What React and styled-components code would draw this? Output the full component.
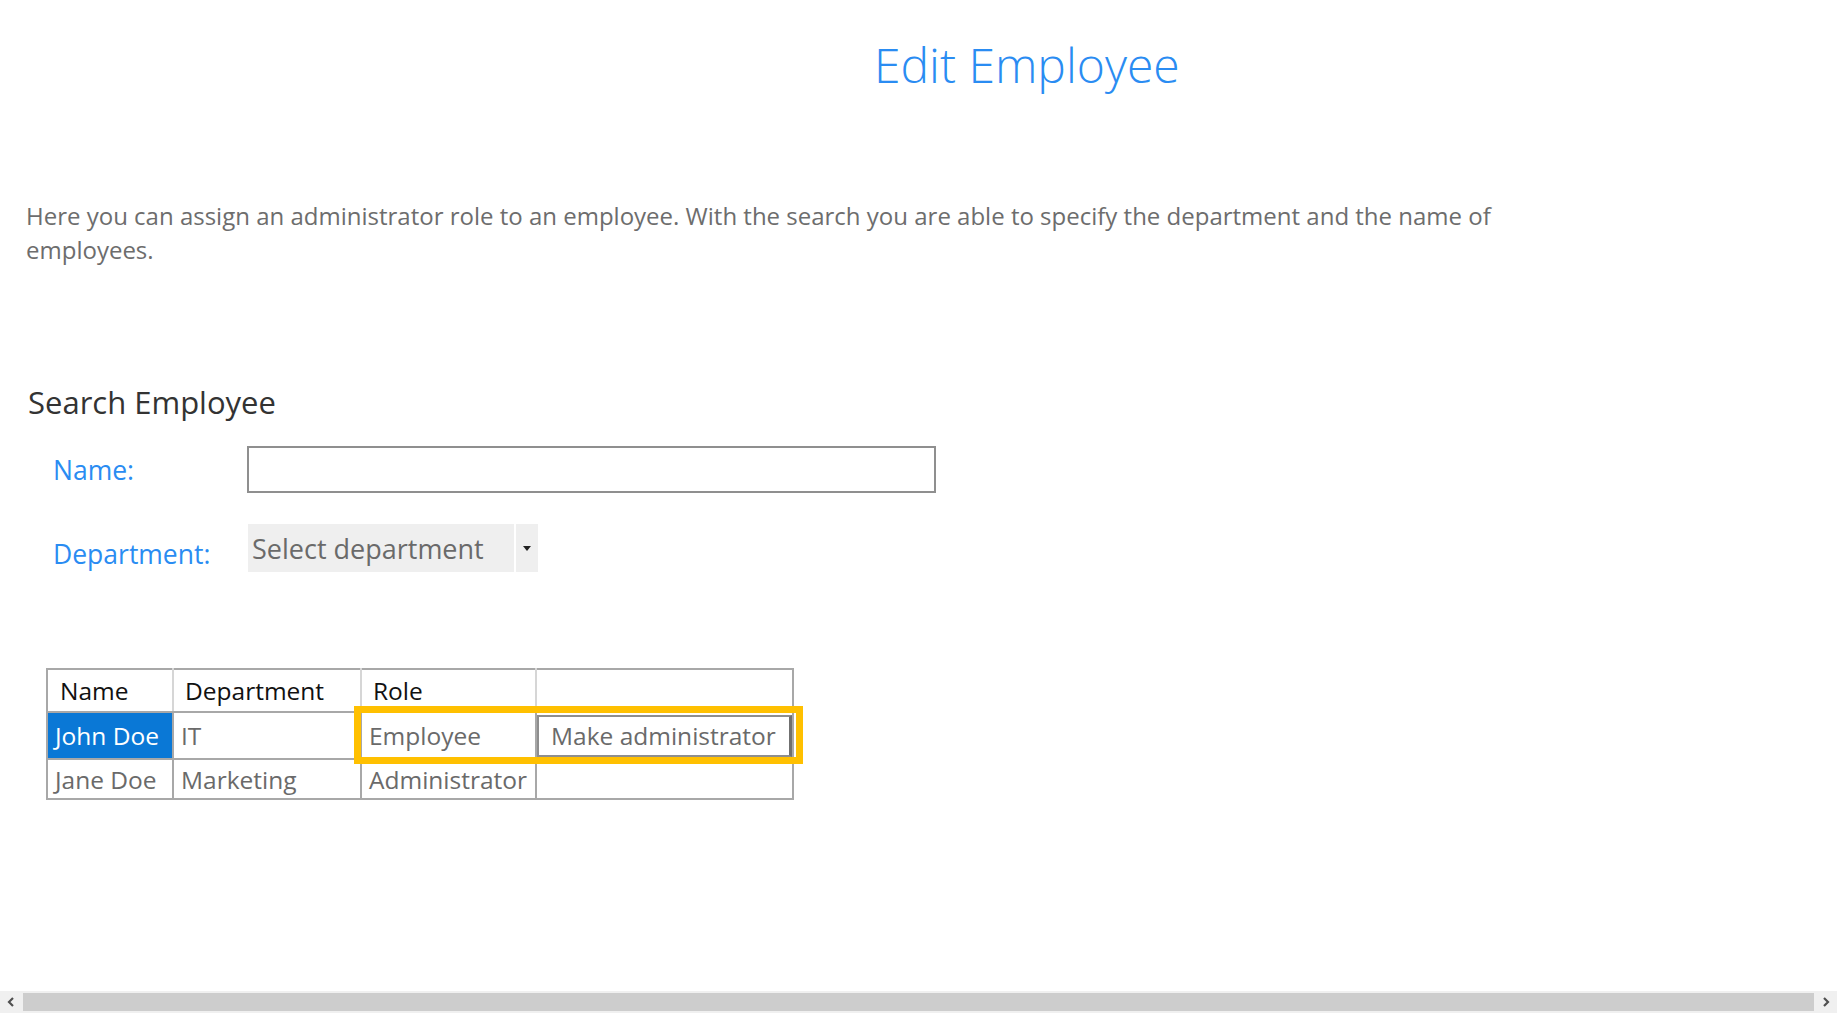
import React from "react";
import styled, { createGlobalStyle } from "styled-components";

const GlobalStyle = createGlobalStyle`
  html, body {
    margin: 0;
    padding: 0;
    background: #ffffff;
    overflow: hidden;
  }
  body {
    font-family: "Open Sans", "Noto Sans", "Liberation Sans", sans-serif;
  }
`;

const employees = [
  { name: "John Doe", department: "IT", role: "Employee", selected: true, action: "Make administrator" },
  { name: "Jane Doe", department: "Marketing", role: "Administrator", selected: false, action: null },
];

const Page = styled.div`
  display: flex;
  flex-direction: column;
  height: 100vh;
`;

const Content = styled.main`
  flex: 1;
  padding: 0 26px;
`;

const Title = styled.h1`
  margin: 34px 0 0 0;
  padding-left: 848px;
  font-size: 48px;
  line-height: 62px;
  font-weight: 300;
  color: #2a8cf2;
  white-space: nowrap;
`;

const Intro = styled.p`
  margin: 103px 0 0 0;
  max-width: 1520px;
  font-size: 24px;
  line-height: 34px;
  color: #6d6d6d;
`;

const SectionTitle = styled.h2`
  margin: 115px 0 0 2px;
  font-size: 31px;
  line-height: 40px;
  font-weight: 400;
  color: #333333;
`;

const Form = styled.div`
  margin-top: 24px;
  padding-left: 27px;
  display: grid;
  grid-template-columns: 194px auto;
  justify-content: start;
  row-gap: 31px;
  align-items: center;
`;

const Label = styled.label`
  font-size: 26.5px;
  line-height: 34px;
  color: #2a8cf2;
  margin-top: ${props => props.offset || 0}px;
`;

const TextInput = styled.input`
  box-sizing: border-box;
  width: 689px;
  height: 47px;
  border: 2px solid #8f8f8f;
  background: #ffffff;
  outline: none;
  font-family: inherit;
  font-size: 22px;
  padding: 0 10px;
`;

const Select = styled.div`
  display: flex;
  height: 48px;
  width: 290px;
  background: #efefef;
  margin-left: 1px;
`;

const SelectValue = styled.div`
  flex: 1;
  display: flex;
  align-items: center;
  padding-left: 4px;
  font-size: 27px;
  color: #6a6a6a;
  border-right: 2px solid #ffffff;
`;

const SelectArrow = styled.div`
  width: 22px;
  display: flex;
  align-items: center;
  justify-content: center;
`;

const TableWrap = styled.div`
  position: relative;
  margin: 96px 0 0 20px;
  width: max-content;
`;

const Table = styled.table`
  border-collapse: collapse;
  border: 2px solid #a8a8a8;
  font-size: 24.5px;
`;

const HeadCell = styled.th`
  box-sizing: border-box;
  width: ${props => props.w}px;
  height: 43px;
  padding: 0 0 0 ${props => props.pad || 14}px;
  text-align: left;
  font-weight: 400;
  color: #111111;
  border: 2px solid #d6d6d6;
  border-top: none;
  border-bottom: 2px solid #a8a8a8;
  &:first-child { border-left: none; }
  &:last-child { border-right: none; }
`;

const Cell = styled.td`
  box-sizing: border-box;
  height: ${props => props.h}px;
  padding: 0 0 0 ${props => (props.flush ? 0 : 7)}px;
  color: ${props => (props.selected ? "#ffffff" : "#6a6a6a")};
  background: ${props => (props.selected ? "#0a78d6" : "transparent")};
  border: 2px solid #a8a8a8;
  white-space: nowrap;
  &:first-child { border-left: none; }
  &:last-child { border-right: none; }
`;

const ActionButton = styled.button`
  box-sizing: border-box;
  display: flex;
  align-items: center;
  width: 100%;
  height: 42px;
  padding: 0 0 0 12px;
  background: #ffffff;
  border: 2px solid #8e8e8e;
  border-right: 3px solid #707070;
  font-family: inherit;
  font-size: 24.5px;
  color: #6a6a6a;
  cursor: pointer;
`;

const Highlight = styled.div`
  position: absolute;
  left: 308px;
  top: 38px;
  width: 449px;
  height: 58px;
  box-sizing: border-box;
  border: 7px solid #ffc000;
  pointer-events: none;
`;

const ScrollBar = styled.div`
  display: flex;
  height: 22px;
  background: #f0f0f0;
  align-items: center;
`;

const ScrollArrow = styled.div`
  width: 22px;
  height: 22px;
  display: flex;
  align-items: center;
  justify-content: center;
`;

const ScrollThumb = styled.div`
  flex: 1;
  height: 18px;
  margin: 0 1px;
  background: #cdcdcd;
`;

const Chevron = ({ dir }) => (
  <svg width="10" height="10" viewBox="0 0 10 10">
    <path
      d={dir === "left" ? "M7 1 L3 5 L7 9" : "M3 1 L7 5 L3 9"}
      fill="none"
      stroke="#505050"
      strokeWidth="2.2"
    />
  </svg>
);

export default function App() {
  return (
    <Page>
      <GlobalStyle />
      <Content>
        <Title>Edit Employee</Title>
        <Intro>
          Here you can assign an administrator role to an employee. With the search you are able to specify the
          department and the name of employees.
        </Intro>

        <SectionTitle>Search Employee</SectionTitle>
        <Form>
          <Label>Name:</Label>
          <TextInput type="text" />
          <Label offset={12}>Department:</Label>
          <Select>
            <SelectValue>Select department</SelectValue>
            <SelectArrow>
              <svg width="8" height="5" viewBox="0 0 8 5">
                <path d="M0 0 L8 0 L4 5 Z" fill="#222" />
              </svg>
            </SelectArrow>
          </Select>
        </Form>

        <TableWrap>
          <Table>
            <thead>
              <tr>
                <HeadCell w={126} pad={12}>Name</HeadCell>
                <HeadCell w={188} pad={11}>Department</HeadCell>
                <HeadCell w={175} pad={11}>Role</HeadCell>
                <HeadCell w={257} />
              </tr>
            </thead>
            <tbody>
              {employees.map((e, i) => (
                <tr key={i}>
                  <Cell h={i === 0 ? 47 : 40} selected={e.selected}>{e.name}</Cell>
                  <Cell h={i === 0 ? 47 : 40}>{e.department}</Cell>
                  <Cell h={i === 0 ? 47 : 40}>{e.role}</Cell>
                  <Cell h={i === 0 ? 47 : 40} flush>
                    {e.action && <ActionButton>{e.action}</ActionButton>}
                  </Cell>
                </tr>
              ))}
            </tbody>
          </Table>
          <Highlight />
        </TableWrap>
      </Content>
      <ScrollBar>
        <ScrollArrow><Chevron dir="left" /></ScrollArrow>
        <ScrollThumb />
        <ScrollArrow><Chevron dir="right" /></ScrollArrow>
      </ScrollBar>
    </Page>
  );
}
